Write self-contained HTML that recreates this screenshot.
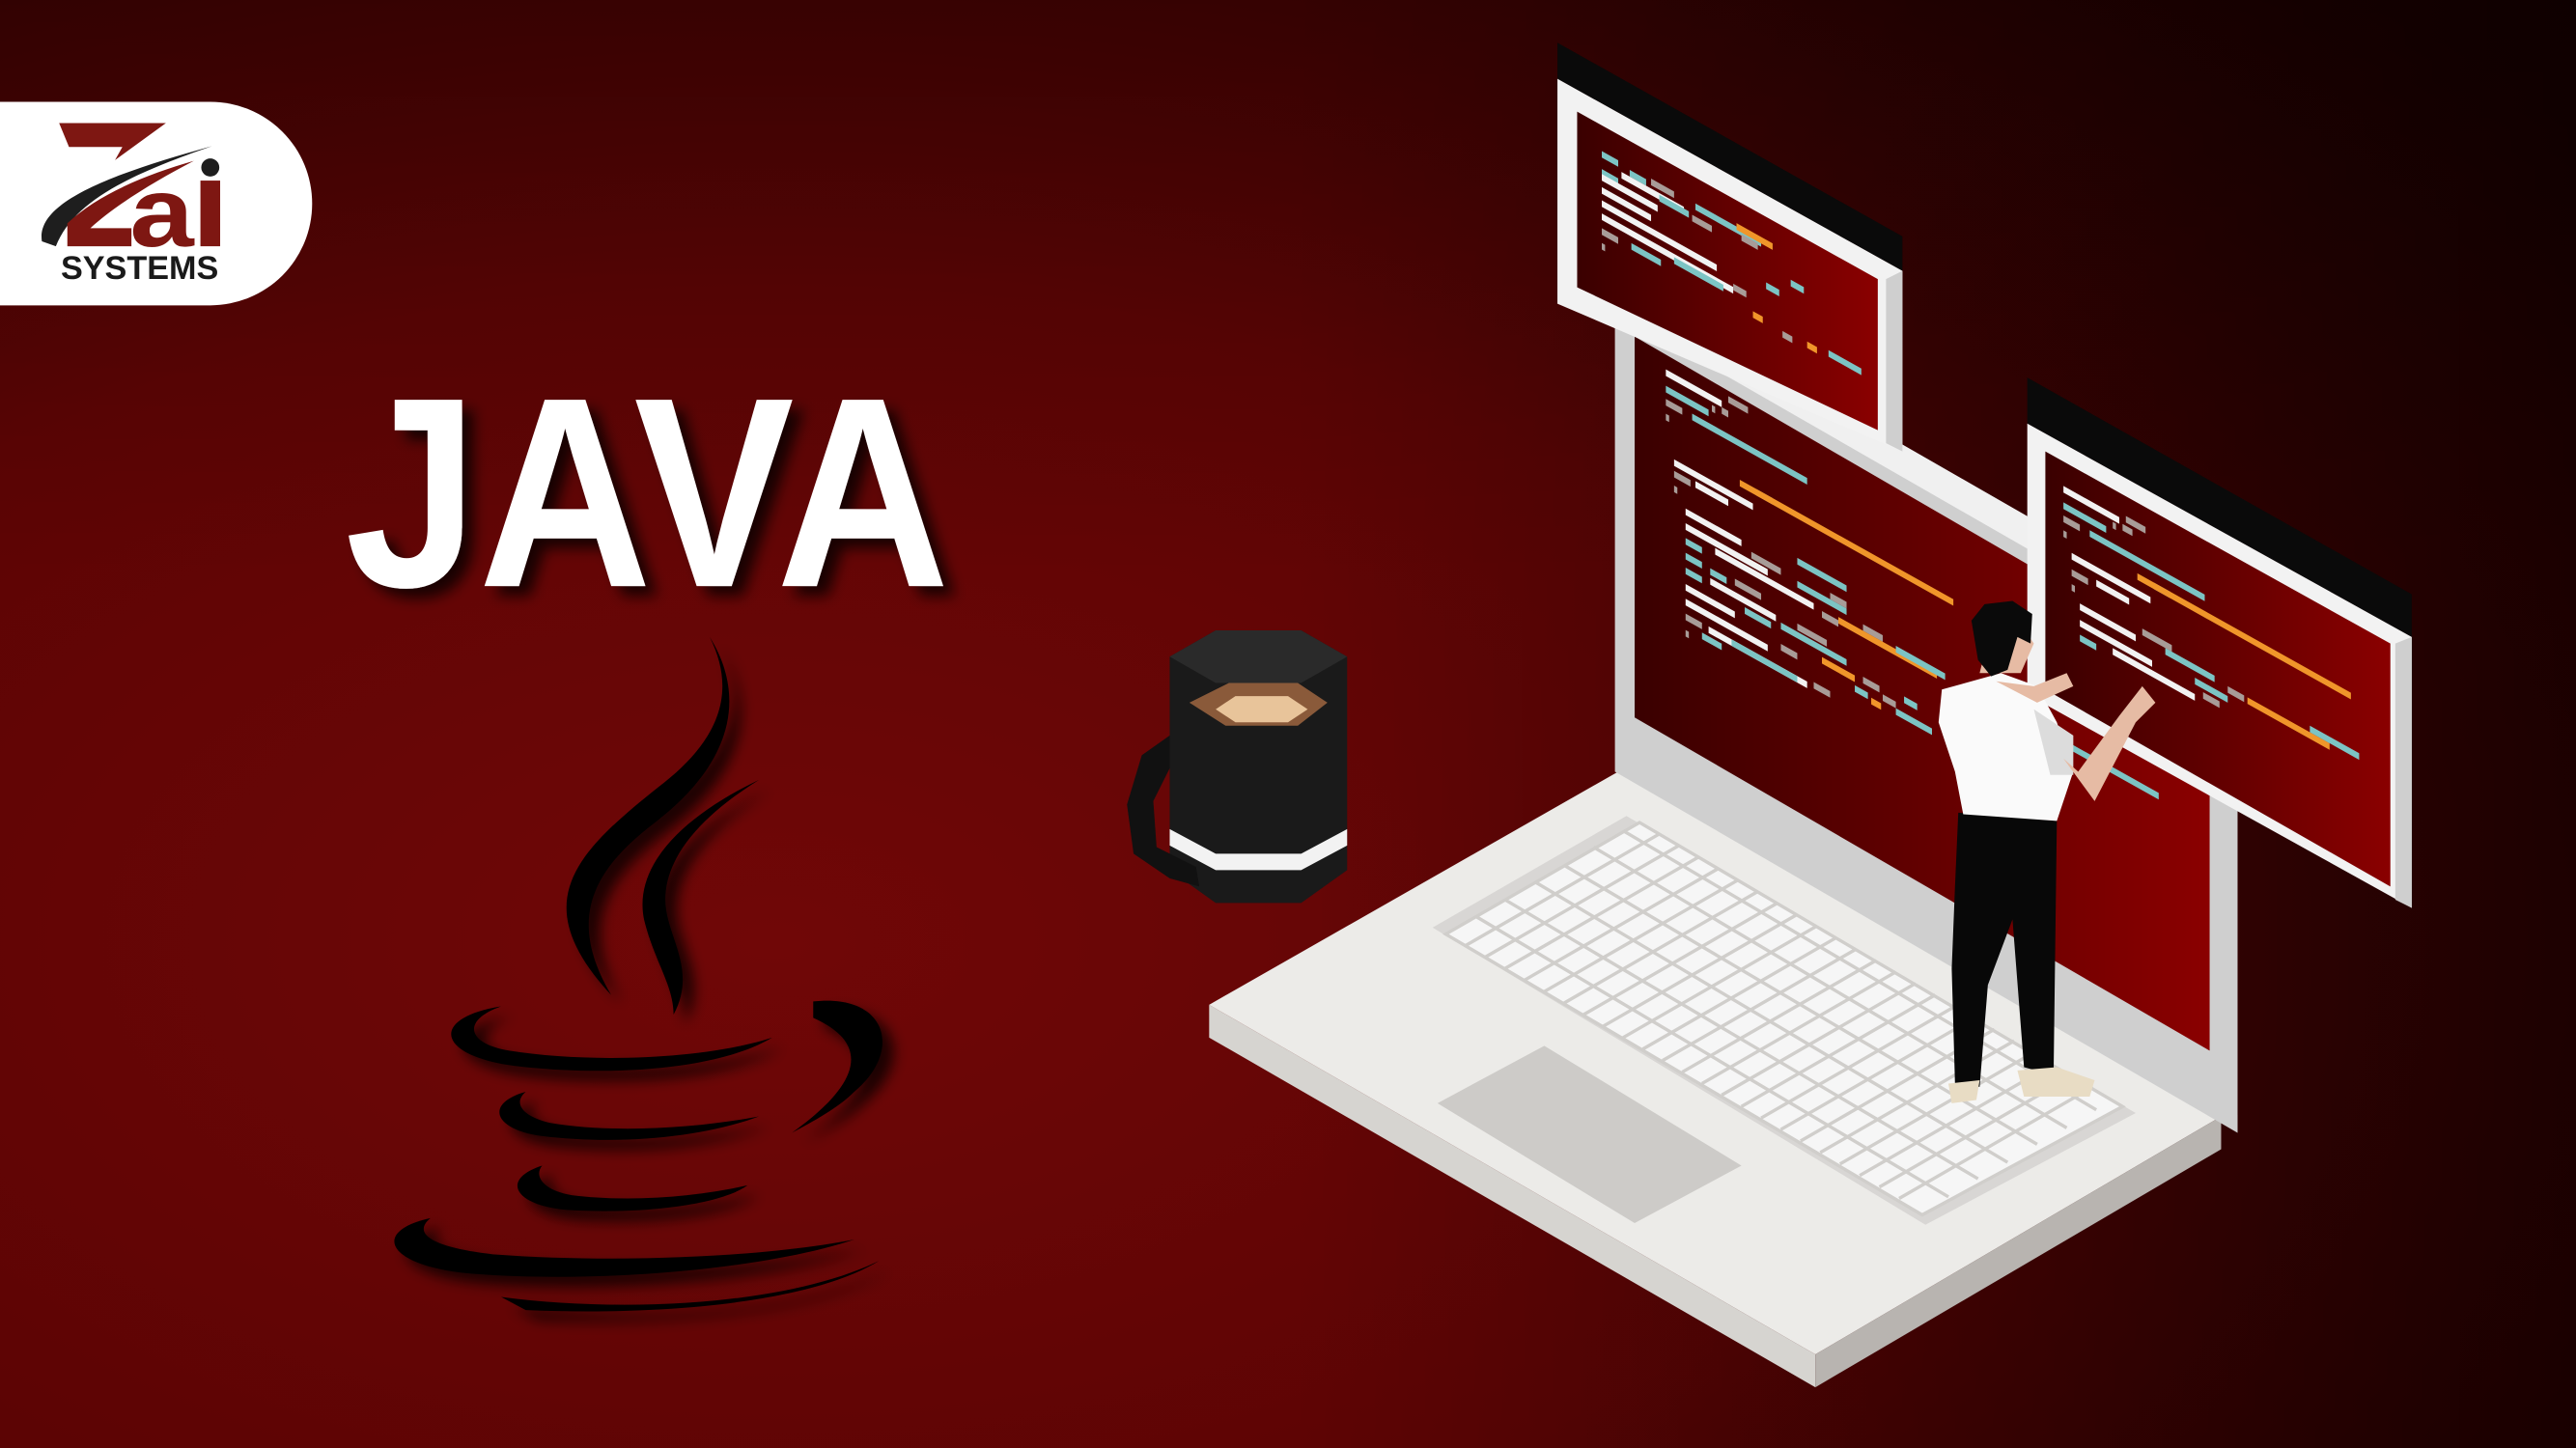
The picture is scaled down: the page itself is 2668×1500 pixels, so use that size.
<!DOCTYPE html>
<html><head><meta charset="utf-8"><style>
html,body{margin:0;padding:0;background:#5a0303;}
svg{display:block}
</style></head><body>
<svg width="2668" height="1500" viewBox="0 0 1568 882" xmlns="http://www.w3.org/2000/svg" preserveAspectRatio="none">
<defs>
<radialGradient id="bg" cx="0.3" cy="0.65" r="0.9">
<stop offset="0" stop-color="#700707"/><stop offset="0.5" stop-color="#5c0404"/><stop offset="1" stop-color="#2a0000"/>
</radialGradient>
<linearGradient id="bg2" x1="0" y1="0" x2="1" y2="0">
<stop offset="0.5" stop-color="#000" stop-opacity="0"/><stop offset="1" stop-color="#000" stop-opacity="0.55"/>
</linearGradient>
<linearGradient id="bg3" x1="0" y1="0" x2="0" y2="1">
<stop offset="0" stop-color="#000" stop-opacity="0.2"/><stop offset="0.4" stop-color="#000" stop-opacity="0"/>
</linearGradient>
<linearGradient id="scr" x1="0" y1="0" x2="1" y2="0">
<stop offset="0" stop-color="#3a0000"/><stop offset="1" stop-color="#8a0000"/>
</linearGradient>
<filter id="sh" x="-20%" y="-20%" width="140%" height="140%"><feDropShadow dx="7" dy="6" stdDeviation="4" flood-color="#000" flood-opacity="0.75"/></filter>
</defs>
<rect width="1568" height="882" fill="url(#bg)"/>
<rect width="1568" height="882" fill="url(#bg2)"/>
<rect width="1568" height="882" fill="url(#bg3)"/>

<!-- logo -->
<path d="M0 62 H128 A62 62 0 0 1 128 186 H0 Z" fill="#fff"/>
<path d="M36 75 H101 L70 97.5 L74.5 89.5 H42 Z" fill="#7e1712"/>
<path d="M25.5 147 C22 125 60 108 129 89 C80 106 45 122 34 150 Z" fill="#1e1e1e"/>
<path d="M41 150 V136 C60 118 90 106 118 98 C95 110 70 125 55 139 H80 V150 Z" fill="#7e1712"/>
<text x="79" y="150" font-family="Liberation Sans,sans-serif" font-weight="bold" font-size="60" fill="#7e1712" textLength="39" lengthAdjust="spacingAndGlyphs">a</text>
<circle cx="128" cy="102" r="5.5" fill="#1e1e1e"/>
<rect x="122" y="110" width="12" height="40" fill="#7e1712"/>
<text x="37" y="170" font-family="Liberation Sans,sans-serif" font-weight="bold" font-size="20" fill="#1a1a1a" textLength="96" lengthAdjust="spacingAndGlyphs">SYSTEMS</text>

<!-- JAVA -->
<text x="210" y="357" font-family="Liberation Sans,sans-serif" font-weight="bold" font-size="165" fill="#fff" textLength="368" lengthAdjust="spacingAndGlyphs" filter="url(#sh)">JAVA</text>

<!-- java cup logo -->
<g fill="#050505" filter="url(#sh)">
<path d="M432 388 C448 420 440 450 400 480 C350 520 320 550 372 606 C345 560 360 530 400 500 C445 465 455 425 432 388 Z"/>
<path d="M462 475 C420 495 385 525 392 560 C398 585 410 600 410 618 C425 590 405 570 405 548 C405 520 430 495 462 475 Z"/>
<path d="M305 613 C260 620 265 645 320 650 C380 656 440 650 470 632 C430 645 360 648 310 640 C285 636 280 622 305 613 Z"/>
<path d="M495 610 C540 605 550 640 520 665 C510 675 495 683 482 690 C510 670 540 640 495 620 Z"/>
<path d="M320 665 C295 672 300 688 330 692 C380 698 430 692 462 680 C420 688 370 690 335 684 C318 680 312 672 320 665 Z"/>
<path d="M330 710 C305 718 312 734 345 737 C395 740 440 733 455 722 C420 730 380 732 348 728 C330 725 325 716 330 710 Z"/>
<path d="M262 742 C225 750 235 772 290 776 C370 782 470 772 520 755 C470 765 380 770 300 764 C265 760 250 752 262 742 Z"/>
<path d="M305 790 C380 800 480 795 535 768 C500 790 420 802 320 798 Z"/>
</g>

<!-- mug -->
<g>
<path d="M712 400 L740 384 H792 L820 400 V530 L792 550 H740 L712 530 Z" fill="#1a1a1a"/>
<path d="M712 400 L740 384 H792 L820 400 L792 416 H740 Z" fill="#2a2a2a"/>
<path d="M724 428 L748 416 H790 L808 428 L790 442 H746 Z" fill="#8a5a3a"/>
<path d="M740 432 L752 424 H784 L796 432 L784 440 H752 Z" fill="#e8c49a"/>
<path d="M712 505 L740 520 H792 L820 505 V515 L792 530 H740 L712 515 Z" fill="#f2f2f2"/>
<path d="M712 448 L695 460 L686 490 L690 520 L712 535 L730 540 L728 528 L704 516 L702 488 L712 468 Z" fill="#111"/>
</g>

<!-- laptop base -->
<path d="M736 612 L985 470 L1352 680 L1105 825 Z" fill="#ecebe8"/>
<path d="M736 612 L1105 825 L1105 845 L736 632 Z" fill="#d6d4d0"/>
<path d="M1105 825 L1352 680 L1352 700 L1105 845 Z" fill="#b8b4b0"/>
<path d="M872 565 L990 497 L1300 678 L1172 746 Z" fill="#d8d6d4"/>
<g stroke="#d0cecb" stroke-width="2">
<path d="M880 569 L998 501 L1292 674 L1170 740 Z" fill="#f6f6f6"/>
<path d="M892 576 L1010 508 M904 583 L1022 515 M916 590 L1034 522 M928 597 L1046 529 M940 604 L1058 536 M952 611 L1070 543 M964 618 L1082 550 M976 625 L1094 557 M988 632 L1106 564 M1000 639 L1118 571 M1012 646 L1130 578 M1024 653 L1142 585 M1036 660 L1154 592 M1048 667 L1166 599 M1060 674 L1178 606 M1072 681 L1190 613 M1084 688 L1202 620 M1096 695 L1214 627 M1108 702 L1226 634 M1120 709 L1238 641 M1132 716 L1250 648 M1144 723 L1262 655 M1156 730 L1274 662"/>
<path d="M898 558 L1186 729 M916 548 L1204 718 M934 537 L1222 708 M952 527 L1240 697 M970 516 L1258 687 M988 506 L1276 676"/>
</g>
<path d="M875 672 L940 637 L1060 710 L995 745 Z" fill="#cdcbc8"/>

<!-- laptop screen -->
<path d="M983 190 L1000 180 L1362 388 L1362 690 L983 470 Z" fill="#cfcfcf"/>
<path d="M983 190 L1000 180 L1362 388 L1345 398 Z" fill="#f0f0f0"/>
<path d="M995 205 L1345 408 L1345 640 L995 437 Z" fill="url(#scr)"/>

<!-- top panel -->
<path d="M948 26 L1158 144 V165 L948 48 Z" fill="#0a0a0a"/>
<path d="M948 48 L1158 165 V275 L948 185 Z" fill="#f2f2f2"/>
<path d="M1148 170 L1158 165 V275 L1148 270 Z" fill="#cfcfcf"/>
<path d="M960 68 L1143 170 V262 L960 175 Z" fill="url(#scr)"/>

<!-- right panel -->
<path d="M1234 230 L1468 362 V388 L1234 258 Z" fill="#0a0a0a"/>
<path d="M1234 258 L1468 388 V553 L1234 423 Z" fill="#f2f2f2"/>
<path d="M1458 392 L1468 388 V553 L1458 548 Z" fill="#cfcfcf"/>
<path d="M1245 275 L1455 392 V540 L1245 420 Z" fill="url(#scr)"/>

<!-- code top panel -->
<g transform="matrix(1,0.56,0,1,975,92)">
<rect x="0" y="0" width="10" height="4" fill="#7cc4c4"/>
<rect x="0" y="11" width="10" height="4" fill="#7cc4c4"/><rect x="17" y="2" width="10" height="4" fill="#7cc4c4"/><rect x="30" y="0" width="14" height="4" fill="#a89c98"/>
<rect x="0" y="14" width="34" height="4" fill="#f2f2f2"/><rect x="12" y="6" width="38" height="4" fill="#f2f2f2"/>
<rect x="0" y="22" width="30" height="4" fill="#f2f2f2"/><rect x="35" y="7" width="18" height="4" fill="#7cc4c4"/><rect x="57" y="0" width="40" height="4" fill="#7cc4c4"/>
<rect x="0" y="30" width="70" height="4" fill="#f2f2f2"/><rect x="55" y="8" width="12" height="4" fill="#a89c98"/><rect x="85" y="3" width="10" height="4" fill="#a89c98"/>
<rect x="0" y="38" width="80" height="4" fill="#f2f2f2"/><rect x="82" y="-2" width="22" height="4" fill="#f0962a"/>
<rect x="0" y="47" width="10" height="4" fill="#a89c98"/><rect x="18" y="46" width="18" height="4" fill="#7cc4c4"/><rect x="44" y="40" width="30" height="4" fill="#7cc4c4"/>
<rect x="0" y="56" width="2" height="4" fill="#a89c98"/><rect x="80" y="36" width="8" height="4" fill="#a89c98"/><rect x="100" y="24" width="8" height="4" fill="#7cc4c4"/><rect x="115" y="14" width="8" height="4" fill="#7cc4c4"/>
<rect x="92" y="46" width="6" height="4" fill="#f0962a"/><rect x="110" y="48" width="6" height="4" fill="#a89c98"/><rect x="125" y="46" width="6" height="4" fill="#f0962a"/><rect x="138" y="44" width="20" height="4" fill="#7cc4c4"/>
</g>

<!-- code laptop screen -->
<g transform="matrix(1,0.56,0,1,1014,225)">
<rect x="0" y="0" width="34" height="4" fill="#f2f2f2"/><rect x="38" y="-5" width="12" height="4" fill="#a89c98"/>
<rect x="0" y="10" width="26" height="4" fill="#7cc4c4"/><rect x="28" y="6" width="2" height="4" fill="#a89c98"/><rect x="34" y="4" width="4" height="4" fill="#a89c98"/>
<rect x="0" y="18" width="10" height="4" fill="#a89c98"/><rect x="16" y="18" width="70" height="4" fill="#7cc4c4"/>
<rect x="0" y="27" width="2" height="4" fill="#a89c98"/>
<rect x="5" y="52" width="48" height="4" fill="#f2f2f2"/><rect x="5" y="59" width="10" height="4" fill="#a89c98"/><rect x="18" y="58" width="20" height="4" fill="#f2f2f2"/><rect x="55" y="42" width="10" height="4" fill="#a89c98"/>
<rect x="5" y="68" width="2" height="4" fill="#a89c98"/><rect x="45" y="42" width="130" height="4" fill="#f0962a"/>
<rect x="12" y="78" width="34" height="4" fill="#f2f2f2"/><rect x="12" y="87" width="50" height="4" fill="#f2f2f2"/><rect x="52" y="82" width="18" height="4" fill="#a89c98"/><rect x="80" y="70" width="30" height="4" fill="#7cc4c4"/>
<rect x="12" y="96" width="10" height="4" fill="#7cc4c4"/><rect x="30" y="92" width="60" height="4" fill="#f2f2f2"/><rect x="80" y="84" width="30" height="4" fill="#7cc4c4"/><rect x="100" y="80" width="10" height="4" fill="#a89c98"/>
<rect x="12" y="105" width="10" height="4" fill="#7cc4c4"/><rect x="27" y="106" width="10" height="4" fill="#7cc4c4"/><rect x="42" y="104" width="16" height="4" fill="#a89c98"/><rect x="95" y="94" width="10" height="4" fill="#a89c98"/><rect x="120" y="88" width="12" height="4" fill="#a89c98"/>
<rect x="12" y="114" width="10" height="4" fill="#7cc4c4"/><rect x="27" y="112" width="40" height="4" fill="#f2f2f2"/><rect x="80" y="110" width="18" height="4" fill="#a89c98"/><rect x="105" y="92" width="60" height="4" fill="#f0962a"/><rect x="140" y="90" width="30" height="4" fill="#7cc4c4"/>
<rect x="12" y="124" width="30" height="4" fill="#f2f2f2"/><rect x="48" y="118" width="16" height="4" fill="#7cc4c4"/><rect x="70" y="115" width="40" height="4" fill="#7cc4c4"/>
<rect x="12" y="133" width="50" height="4" fill="#f2f2f2"/><rect x="70" y="128" width="10" height="4" fill="#a89c98"/><rect x="95" y="122" width="20" height="4" fill="#f0962a"/><rect x="120" y="120" width="10" height="4" fill="#a89c98"/>
<rect x="12" y="142" width="10" height="4" fill="#a89c98"/><rect x="26" y="142" width="60" height="4" fill="#f2f2f2"/><rect x="115" y="128" width="8" height="4" fill="#7cc4c4"/><rect x="132" y="124" width="8" height="4" fill="#a89c98"/><rect x="145" y="118" width="8" height="4" fill="#7cc4c4"/>
<rect x="12" y="152" width="2" height="4" fill="#a89c98"/><rect x="22" y="148" width="12" height="4" fill="#7cc4c4"/><rect x="40" y="142" width="40" height="4" fill="#7cc4c4"/><rect x="90" y="140" width="10" height="4" fill="#a89c98"/><rect x="125" y="130" width="6" height="4" fill="#f0962a"/><rect x="140" y="128" width="22" height="4" fill="#7cc4c4"/>
<rect x="240" y="90" width="60" height="4" fill="#7cc4c4"/>
</g>

<!-- code right panel -->
<g transform="matrix(1,0.56,0,1,1256,296)">
<rect x="0" y="0" width="34" height="4" fill="#f2f2f2"/><rect x="38" y="-3" width="12" height="4" fill="#a89c98"/>
<rect x="0" y="10" width="26" height="4" fill="#7cc4c4"/><rect x="30" y="5" width="2" height="4" fill="#a89c98"/><rect x="36" y="3" width="6" height="4" fill="#a89c98"/>
<rect x="0" y="18" width="10" height="4" fill="#a89c98"/><rect x="16" y="18" width="70" height="4" fill="#7cc4c4"/>
<rect x="0" y="27" width="2" height="4" fill="#a89c98"/>
<rect x="5" y="38" width="48" height="4" fill="#f2f2f2"/><rect x="5" y="48" width="10" height="4" fill="#a89c98"/><rect x="20" y="46" width="20" height="4" fill="#f2f2f2"/><rect x="55" y="28" width="10" height="4" fill="#a89c98"/>
<rect x="5" y="57" width="2" height="4" fill="#a89c98"/><rect x="45" y="28" width="130" height="4" fill="#f0962a"/>
<rect x="10" y="66" width="34" height="4" fill="#f2f2f2"/><rect x="10" y="76" width="44" height="4" fill="#f2f2f2"/><rect x="48" y="60" width="18" height="4" fill="#a89c98"/>
<rect x="10" y="85" width="10" height="4" fill="#7cc4c4"/><rect x="30" y="82" width="50" height="4" fill="#f2f2f2"/><rect x="62" y="64" width="30" height="4" fill="#7cc4c4"/><rect x="80" y="72" width="20" height="4" fill="#7cc4c4"/>
<rect x="85" y="78" width="10" height="4" fill="#a89c98"/><rect x="100" y="66" width="10" height="4" fill="#a89c98"/><rect x="112" y="66" width="50" height="4" fill="#f0962a"/><rect x="150" y="62" width="30" height="4" fill="#7cc4c4"/>
</g>

<!-- person -->
<g>
<path d="M1188 590 L1190 660 L1205 662 L1210 600 L1225 560 L1232 650 L1250 655 L1252 500 L1192 495 L1190 540 Z" fill="#080808"/>
<path d="M1186 660 L1205 658 L1203 670 L1188 672 Z" fill="#e8dcc4"/>
<path d="M1228 652 L1252 650 L1275 658 L1272 668 L1232 668 Z" fill="#e8dcc4"/>
<path d="M1182 420 L1218 410 L1240 418 L1252 440 L1262 470 L1252 500 L1195 496 L1190 470 L1180 440 Z" fill="#fafafa"/>
<path d="M1238 432 L1262 448 L1262 472 L1248 472 Z" fill="#dcdcdc"/>
<path d="M1256 462 L1275 488 L1300 440 L1312 428 L1304 418 L1290 436 L1265 470 Z" fill="#e6bba4"/>
<path d="M1215 415 L1240 428 L1262 418 L1258 410 L1238 418 Z" fill="#e6bba4"/>
<path d="M1205 410 L1230 410 L1238 392 L1230 380 L1212 382 Z" fill="#e6bba4"/>
<path d="M1200 378 L1208 368 L1225 366 L1237 374 L1236 392 L1228 388 L1222 408 L1212 412 L1204 402 Z" fill="#0a0a0a"/>
</g>
</svg>
</body></html>
